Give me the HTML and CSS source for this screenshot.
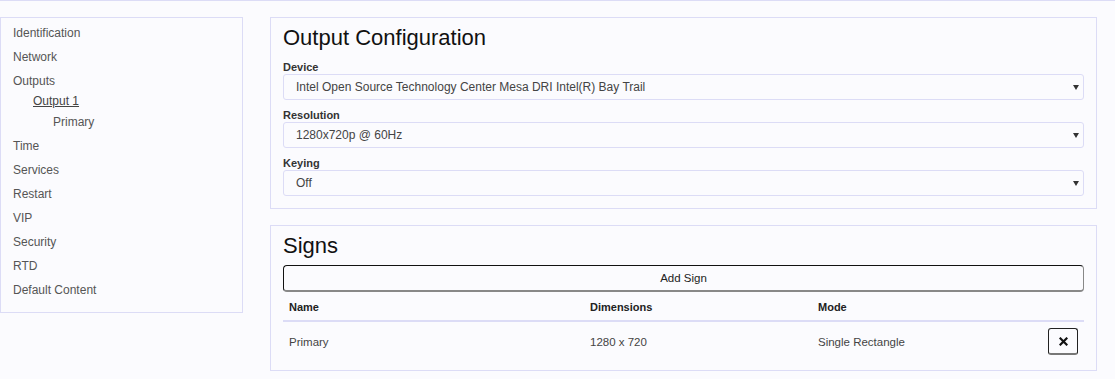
FILE: index.html
```html
<!DOCTYPE html>
<html lang="en">
<head>
    <meta charset="UTF-8">
    <meta name="viewport" content="width=device-width, initial-scale=1.0">
    <title>Output Configuration</title>
    <link rel="stylesheet" href="styles.css">
</head>
<body>

<div class="page">
    <!-- Side navigation -->
    <nav class="sidebar">
        <ul class="nav">
            <li><a href="#">Identification</a></li>
            <li><a href="#">Network</a></li>
            <li>
                <a href="#">Outputs</a>
                <ul class="nav-sub">
                    <li>
                        <a href="#" class="active">Output 1</a>
                        <ul class="nav-sub">
                            <li><a href="#">Primary</a></li>
                        </ul>
                    </li>
                </ul>
            </li>
            <li><a href="#">Time</a></li>
            <li><a href="#">Services</a></li>
            <li><a href="#">Restart</a></li>
            <li><a href="#">VIP</a></li>
            <li><a href="#">Security</a></li>
            <li><a href="#">RTD</a></li>
            <li><a href="#">Default Content</a></li>
        </ul>
    </nav>

    <main class="content">
        <!-- Output settings -->
        <section class="panel">
            <h2>Output Configuration</h2>
            <div class="form-group">
                <label for="device">Device</label>
                <div class="select-wrap">
                    <select id="device">
                        <option>Intel Open Source Technology Center Mesa DRI Intel(R) Bay Trail</option>
                    </select>
                </div>
            </div>
            <div class="form-group">
                <label for="resolution">Resolution</label>
                <div class="select-wrap">
                    <select id="resolution">
                        <option>1280x720p @ 60Hz</option>
                    </select>
                </div>
            </div>
            <div class="form-group">
                <label for="keying">Keying</label>
                <div class="select-wrap">
                    <select id="keying">
                        <option>Off</option>
                    </select>
                </div>
            </div>
        </section>

        <!-- Signs list -->
        <section class="panel panel-signs">
            <h2>Signs</h2>
            <button type="button" class="btn-add">Add Sign</button>
            <table class="signs">
                <thead>
                    <tr>
                        <th class="col-name">Name</th>
                        <th class="col-dim">Dimensions</th>
                        <th class="col-mode">Mode</th>
                        <th></th>
                    </tr>
                </thead>
                <tbody>
                    <tr>
                        <td>Primary</td>
                        <td>1280 x 720</td>
                        <td>Single Rectangle</td>
                        <td class="col-action">
                            <button type="button" class="btn-remove" title="Remove">
                                <svg width="9" height="9" viewBox="0 0 9 9">
                                    <path d="M1.5 1.5 L7.5 7.5 M7.5 1.5 L1.5 7.5" stroke="#111" stroke-width="2.2" stroke-linecap="square"/>
                                </svg>
                            </button>
                        </td>
                    </tr>
                </tbody>
            </table>
        </section>
    </main>
</div>

</body>
</html>
```

FILE: styles.css
```css
body {
    font-family: "Liberation Sans", Arial, sans-serif;
    font-size: 12px;
    background-color: #fbfbfe;
    color: #333;
    margin: 0;
    padding: 0;
    border-top: 1px solid #dcdcf6;
}
.page {
    display: flex;
    align-items: flex-start;
    padding-top: 16px;
}
.sidebar {
    width: 241px;
    border: 1px solid #dcdcf6;
    padding: 3px 0 10px;
}
.nav {
    list-style: none;
    margin: 0;
    padding: 0 0 0 12px;
}
.nav li {
    line-height: 24px;
}
.nav a {
    color: #555;
    text-decoration: none;
}
.nav-sub {
    list-style: none;
    margin: -2px 0 1px;
    padding-left: 20px;
}
.nav-sub li {
    line-height: 21px;
}
.nav-sub .nav-sub {
    margin: 0;
}
.nav a.active {
    color: #444;
    text-decoration: underline;
}
.content {
    width: 827px;
    margin-left: 27px;
    display: flex;
    flex-direction: column;
    gap: 16px;
}
.panel {
    border: 1px solid #dcdcf6;
    padding: 7px 12px 12px;
}
.panel-signs {
    padding-bottom: 9px;
}
.panel h2 {
    font-size: 22px;
    font-weight: normal;
    color: #111;
    line-height: 26px;
    margin: 0 0 9px;
}
.panel-signs h2 {
    margin-bottom: 6px;
}
.form-group {
    margin-bottom: 8px;
}
.form-group:last-child {
    margin-bottom: 0;
}
label {
    display: block;
    font-size: 11px;
    font-weight: bold;
    color: #333;
    line-height: 14px;
}
.select-wrap {
    position: relative;
}
.select-wrap::after {
    content: "";
    position: absolute;
    right: 5px;
    top: 11px;
    border-left: 3px solid transparent;
    border-right: 3px solid transparent;
    border-top: 5px solid #333;
}
select {
    -webkit-appearance: none;
    appearance: none;
    display: block;
    width: 100%;
    height: 26px;
    padding: 0 12px;
    font-family: inherit;
    font-size: 12px;
    color: #444;
    background-color: #fbfbfe;
    border: 1px solid #dcdcf6;
    border-radius: 3px;
}
.btn-add {
    display: block;
    width: 100%;
    height: 27px;
    font-family: inherit;
    font-size: 11.5px;
    color: #222;
    background-color: #fbfbfe;
    border: 1px solid #111;
    border-bottom: 2px solid #888;
    border-right-color: #888;
    border-radius: 4px;
    cursor: pointer;
}
.signs {
    width: 100%;
    border-collapse: collapse;
}
.signs th {
    text-align: left;
    font-size: 11px;
    font-weight: bold;
    color: #222;
    padding: 9px 6px 7px;
    border-bottom: 2px solid #dcdcf6;
}
.col-name {
    width: 289px;
}
.col-dim {
    width: 216px;
}
.signs td {
    font-size: 11.5px;
    color: #444;
    padding: 6px;
}
.col-action {
    text-align: right;
}
.btn-remove {
    width: 30px;
    height: 27px;
    padding: 0;
    background-color: #fbfbfe;
    border: 1px solid #222;
    border-bottom: 2px solid #777;
    border-radius: 3px;
    cursor: pointer;
    vertical-align: middle;
}
.btn-remove svg {
    display: block;
    margin: 0 auto;
}
```
